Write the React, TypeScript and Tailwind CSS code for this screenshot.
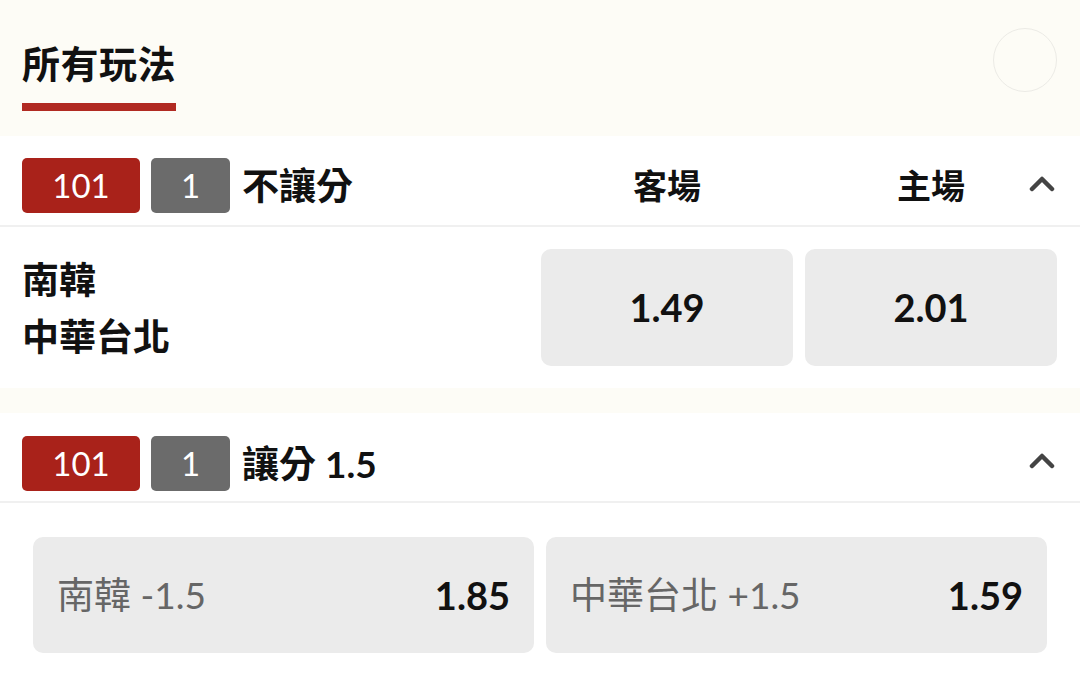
import React from "react";

const font = { fontFamily: "Lato, 'Noto Sans CJK TC', sans-serif" };

function Chevron() {
  return (
    <svg width="26" height="18" viewBox="0 0 26 18" className="text-[#444]">
      <polyline points="3,15 13,5 23,15" fill="none" stroke="currentColor" strokeWidth="4.5" strokeLinecap="round" strokeLinejoin="round" />
    </svg>
  );
}

function Badges() {
  return (
    <div className="flex items-center gap-[11px]">
      <div className="flex h-[55px] w-[118px] items-center justify-center rounded-[5px] bg-[#a9221a] text-[33px] text-white">101</div>
      <div className="flex h-[55px] w-[79px] items-center justify-center rounded-[5px] bg-[#6b6b6b] text-[33px] text-white">1</div>
    </div>
  );
}

export default function App() {
  return (
    <div className="min-h-[681px] w-full overflow-hidden bg-[#fdfcf6] text-[#111]" style={font}>
      {/* Tabs */}
      <div className="flex h-[136px] items-start justify-between pl-[22px] pr-[23px]">
        <div className="pt-[41px]">
          <div className="text-[38px] font-bold leading-[44px] tracking-[0.5px]">所有玩法</div>
          <div className="mt-[18px] h-[8px] w-[154px] bg-[#b12a22]" />
        </div>
        <div className="mt-[28px] h-[64px] w-[64px] rounded-full border border-[#ecebe6]" />
      </div>

      {/* Moneyline */}
      <div className="bg-white">
        <div className="relative grid h-[91px] grid-cols-[1fr_252px_252px] items-start gap-x-[12px] border-b-2 border-[#f0f0f0] pl-[22px] pr-[23px] pt-[22px]">
          <div className="flex items-center gap-[12px]">
            <Badges />
            <span className="text-[37px] font-bold">不讓分</span>
          </div>
          <div className="flex h-[55px] items-center justify-center text-[34px] font-bold">客場</div>
          <div className="flex h-[55px] items-center justify-center text-[34px] font-bold">主場</div>
          <div className="absolute right-[25px] top-[38px]">
            <Chevron />
          </div>
        </div>
        <div className="grid grid-cols-[1fr_252px_252px] items-center gap-x-[12px] pb-[22px] pl-[22px] pr-[23px] pt-[22px]">
          <div className="text-[37px] font-bold leading-[57px]">
            <div>南韓</div>
            <div>中華台北</div>
          </div>
          <button className="flex h-[117px] items-center justify-center rounded-[10px] bg-[#ebebeb] text-[38px] font-bold">1.49</button>
          <button className="flex h-[117px] items-center justify-center rounded-[10px] bg-[#ebebeb] text-[38px] font-bold">2.01</button>
        </div>
      </div>

      <div className="h-[25px]" />

      {/* Handicap */}
      <div className="bg-white">
        <div className="flex h-[90px] items-start justify-between border-b-2 border-[#f0f0f0] pl-[22px] pr-[25px] pt-[23px]">
          <div className="flex items-center gap-[12px]">
            <Badges />
            <span className="text-[37px] font-bold">讓分 1.5</span>
          </div>
          <div className="pt-[15px]">
            <Chevron />
          </div>
        </div>
        <div className="grid grid-cols-2 gap-x-[12px] px-[33px] pb-[30px] pt-[34px]">
          <button className="flex h-[116px] items-center justify-between rounded-[10px] bg-[#ebebeb] px-[24px]">
            <span className="text-[37px] text-[#666]">南韓 -1.5</span>
            <span className="text-[38px] font-bold">1.85</span>
          </button>
          <button className="flex h-[116px] items-center justify-between rounded-[10px] bg-[#ebebeb] px-[24px]">
            <span className="text-[37px] text-[#666]">中華台北 +1.5</span>
            <span className="text-[38px] font-bold">1.59</span>
          </button>
        </div>
      </div>
    </div>
  );
}
